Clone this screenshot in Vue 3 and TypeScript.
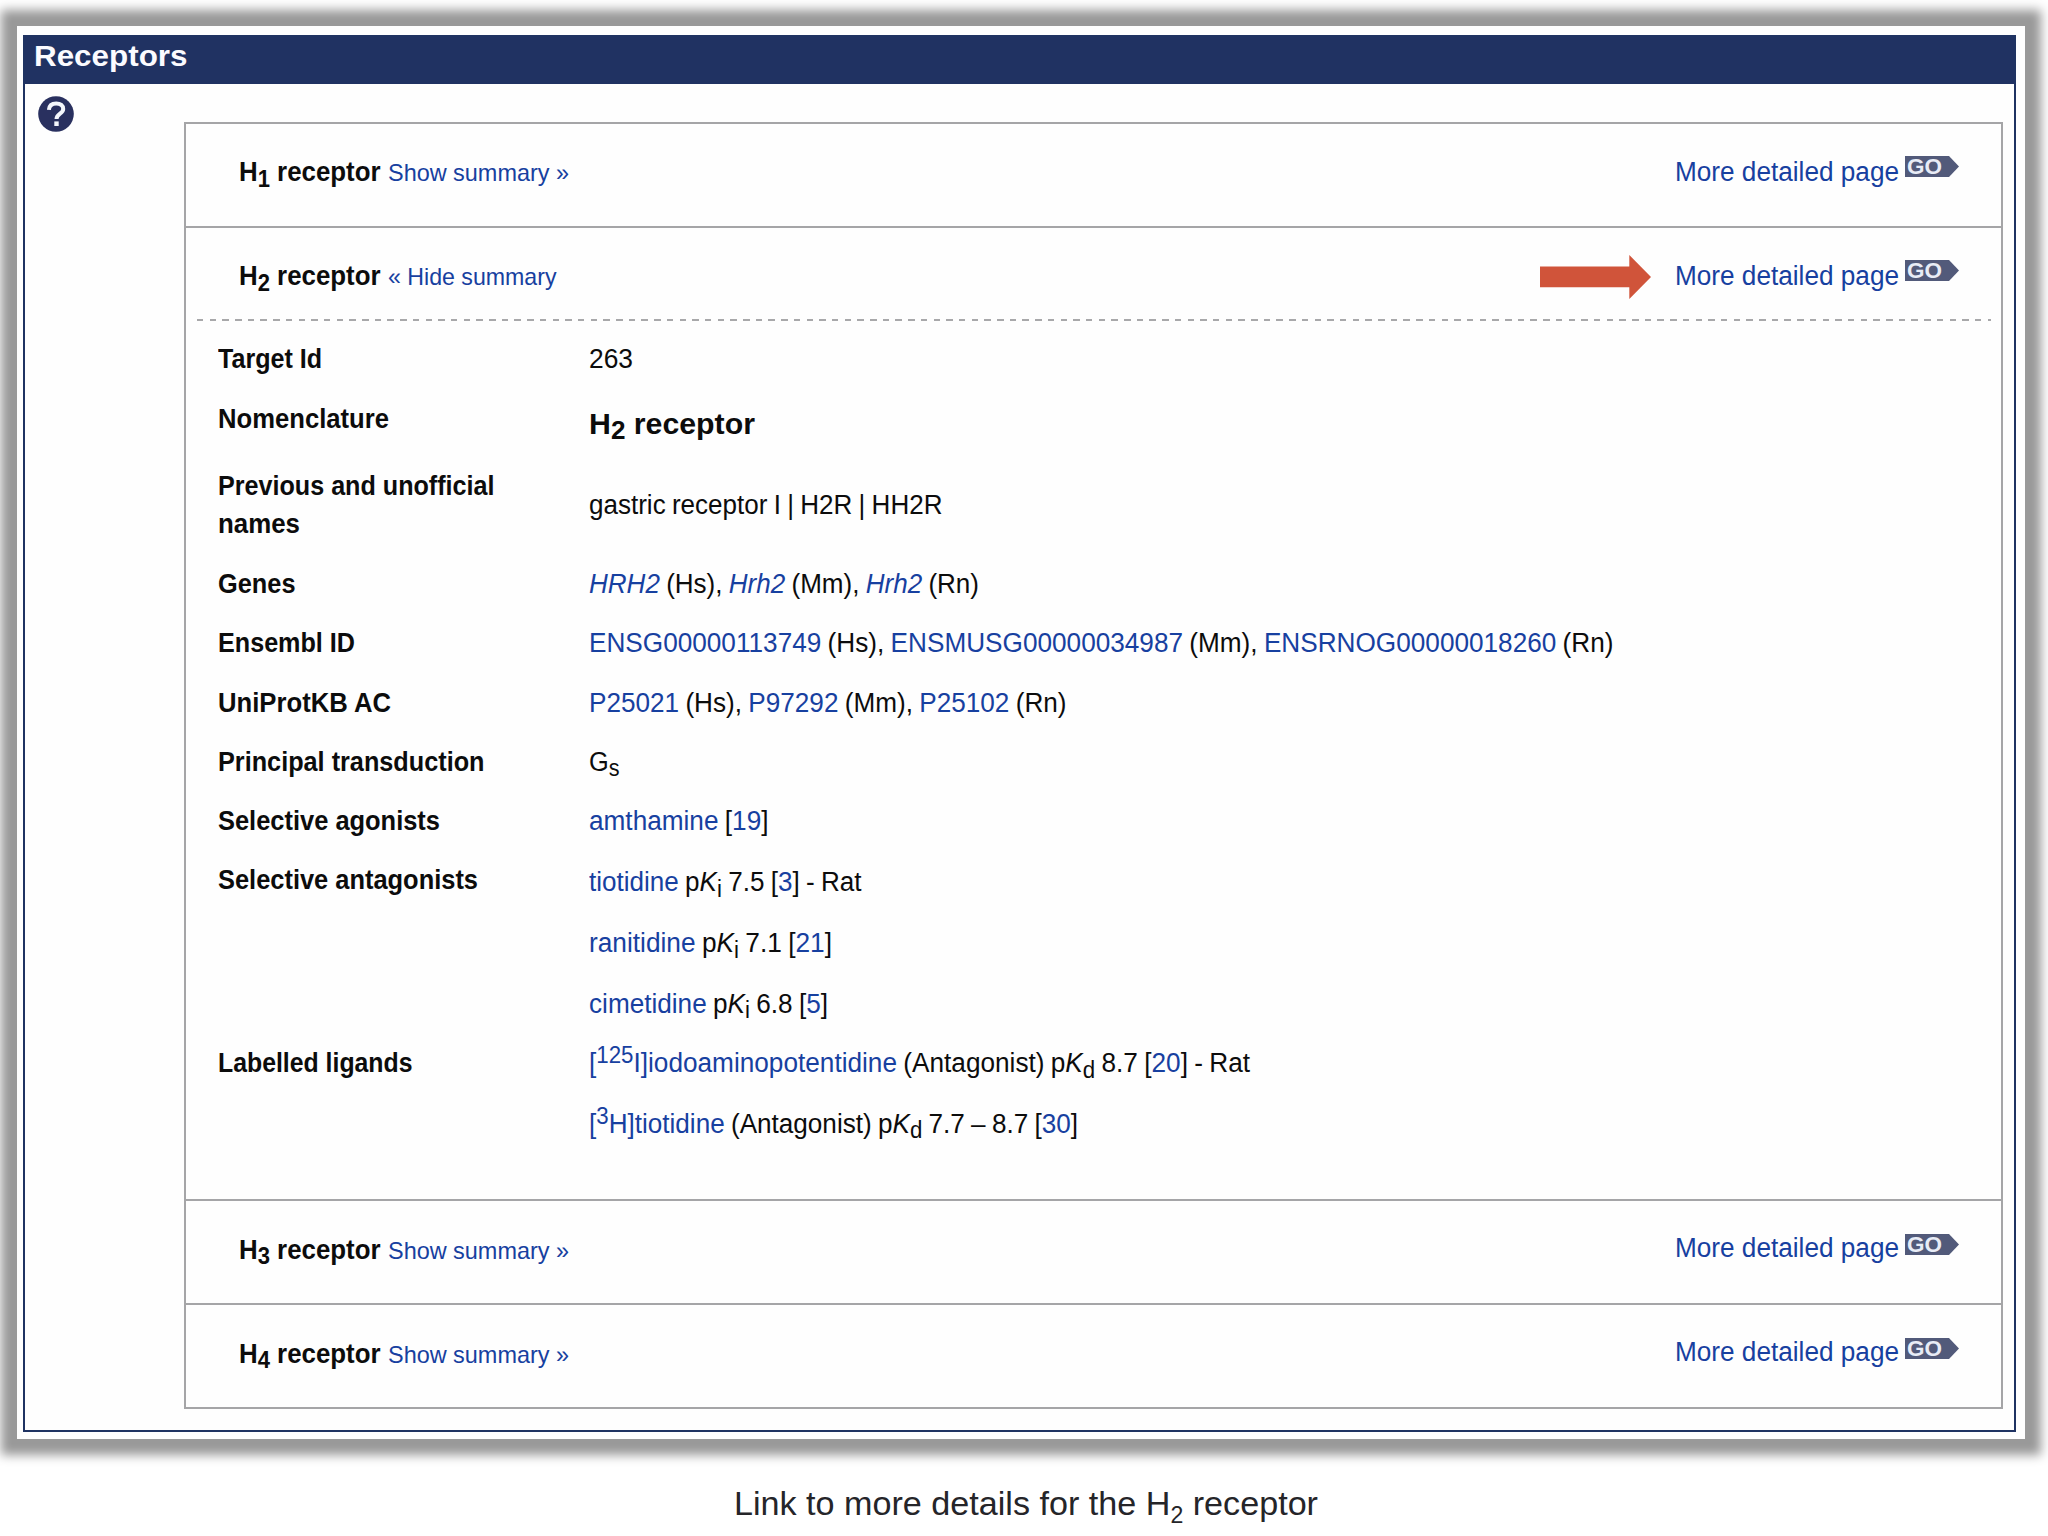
<script setup lang="ts">
import type { Directive } from 'vue'

type Kind = 'text' | 'ref' | 'gene' | 'ital' | 'sub' | 'linksup'
type Seg = [string, Kind?]
interface Line { segs: Seg[]; width: number }
interface Detail { key: string; labels: [string, number][]; lines: Line[] }
interface Receptor { n: string; open: boolean; toggle: string; toggleWidth: number; late?: boolean }

/* Condenses or widens a run of text to the given advance width. */
const vFit: Directive<HTMLElement, number> = {
  mounted(el, { value }) {
    el.style.transform = `scaleX(${value / el.getBoundingClientRect().width})`
  },
}

const receptors: Receptor[] = [
  { n: '1', open: false, toggle: 'Show summary »', toggleWidth: 181 },
  { n: '2', open: true, toggle: '« Hide summary', toggleWidth: 168.5 },
  { n: '3', open: false, toggle: 'Show summary »', toggleWidth: 181, late: true },
  { n: '4', open: false, toggle: 'Show summary »', toggleWidth: 181, late: true },
]

const details: Detail[] = [
  { key: 'target', labels: [['Target Id', 104]], lines: [{ segs: [['263']], width: 44 }] },
  { key: 'name', labels: [['Nomenclature', 171]], lines: [{ segs: [['H'], ['2', 'sub'], [' receptor']], width: 166 }] },
  {
    key: 'previous',
    labels: [['Previous and unofficial', 276.5], ['names', 82]],
    lines: [{ segs: [['gastric receptor I | H2R | HH2R']], width: 353.5 }],
  },
  {
    key: 'genes',
    labels: [['Genes', 77.5]],
    lines: [{ segs: [['HRH2', 'gene'], [' (Hs), '], ['Hrh2', 'gene'], [' (Mm), '], ['Hrh2', 'gene'], [' (Rn)']], width: 390 }],
  },
  {
    key: 'ensembl',
    labels: [['Ensembl ID', 137]],
    lines: [{
      segs: [['ENSG00000113749', 'ref'], [' (Hs), '], ['ENSMUSG00000034987', 'ref'], [' (Mm), '], ['ENSRNOG00000018260', 'ref'], [' (Rn)']],
      width: 1024.5,
    }],
  },
  {
    key: 'uniprot',
    labels: [['UniProtKB AC', 173]],
    lines: [{ segs: [['P25021', 'ref'], [' (Hs), '], ['P97292', 'ref'], [' (Mm), '], ['P25102', 'ref'], [' (Rn)']], width: 477.5 }],
  },
  { key: 'transduction', labels: [['Principal transduction', 266.5]], lines: [{ segs: [['G'], ['s', 'sub']], width: 30.5 }] },
  { key: 'agonists', labels: [['Selective agonists', 222]], lines: [{ segs: [['amthamine', 'ref'], [' ['], ['19', 'ref'], [']']], width: 179.5 }] },
  {
    key: 'antagonists',
    labels: [['Selective antagonists', 260]],
    lines: [
      { segs: [['tiotidine', 'ref'], [' p'], ['K', 'ital'], ['i', 'sub'], [' 7.5 ['], ['3', 'ref'], ['] - Rat']], width: 272.5 },
      { segs: [['ranitidine', 'ref'], [' p'], ['K', 'ital'], ['i', 'sub'], [' 7.1 ['], ['21', 'ref'], [']']], width: 243 },
      { segs: [['cimetidine', 'ref'], [' p'], ['K', 'ital'], ['i', 'sub'], [' 6.8 ['], ['5', 'ref'], [']']], width: 239 },
    ],
  },
  {
    key: 'ligands',
    labels: [['Labelled ligands', 194.5]],
    lines: [
      {
        segs: [['[', 'ref'], ['125', 'linksup'], ['I]iodoaminopotentidine', 'ref'], [' (Antagonist) p'], ['K', 'ital'], ['d', 'sub'], [' 8.7 ['], ['20', 'ref'], ['] - Rat']],
        width: 661,
      },
      {
        segs: [['[', 'ref'], ['3', 'linksup'], ['H]tiotidine', 'ref'], [' (Antagonist) p'], ['K', 'ital'], ['d', 'sub'], [' 7.7 – 8.7 ['], ['30', 'ref'], [']']],
        width: 489,
      },
    ],
  },
]
</script>

<template>
  <main class="page">
    <div class="frame">
      <section class="panel">
        <h1 class="bar"><span class="fit" v-fit="153.5">Receptors</span></h1>
        <div class="body">
          <aside class="side">
            <svg class="help" viewBox="0 0 36 36" width="36" height="36">
              <circle cx="18" cy="18" r="17.8" fill="#29305f" />
              <path d="M10.9 13.8C11.2 9.4 14 7.4 18.2 7.4c4.300 0 7 2.100 7 5.500 0 4.900-6.700 4.600-6.700 10.200" fill="none" stroke="#f4f6fc" stroke-width="4" />
              <rect x="16.3" y="25.4" width="4.4" height="4.6" fill="#f4f6fc" />
            </svg>
          </aside>
          <div class="list">
            <article v-for="r in receptors" :key="r.n" class="item" :class="{ open: r.open, late: r.late }">
              <header class="head">
                <div class="title">
                  <b><span class="fit" v-fit="141.5">H<span class="sub">{{ r.n }}</span> receptor</span></b>
                  <a class="toggle"><span class="fit" v-fit="r.toggleWidth">{{ r.toggle }}</span></a>
                </div>
                <div class="more">
                  <svg v-if="r.open" class="arrow" viewBox="0 0 111 44" width="111" height="44">
                    <path d="M0 11.5H89.3V0L111 22 89.3 44V32.3H0Z" fill="#d0543a" />
                  </svg>
                  <a class="link"><span class="fit" v-fit="224">More detailed page</span></a>
                  <svg class="go" viewBox="0 0 54 21" width="54" height="21">
                    <path d="M0 0H44L54 10.5 44 21H0Z" fill="#525a7a" />
                    <text x="2" y="18" textLength="35" lengthAdjust="spacingAndGlyphs">GO</text>
                  </svg>
                </div>
              </header>
              <div v-if="r.open" class="details">
                <div v-for="d in details" :key="d.key" class="row" :class="d.key">
                  <div class="label">
                    <div v-for="l in d.labels" :key="l[0]"><span class="fit" v-fit="l[1]">{{ l[0] }}</span></div>
                  </div>
                  <div class="value">
                    <div v-for="(line, i) in d.lines" :key="i" class="line">
                      <span class="fit" v-fit="line.width"><span v-for="(s, j) in line.segs" :key="j" :class="s[1]">{{ s[0] }}</span></span>
                    </div>
                  </div>
                </div>
              </div>
            </article>
          </div>
        </div>
      </section>
    </div>
    <p class="caption"><span class="fit" v-fit="584">Link to more details for the H<span class="sub">2</span> receptor</span></p>
  </main>
</template>

<style>
body {
  margin: 0;
  background: #fff;
  overflow: hidden;
}
</style>

<style scoped>
.page {
  box-sizing: border-box;
  width: 2048px;
  height: 1536px;
  padding: 26px 23px 0 16.5px;
  overflow: hidden;
  font: 27px/38px "Liberation Sans", Arial, sans-serif;
  color: #0c0c0c;
  white-space: pre;
}
.page * {
  box-sizing: border-box;
}
.fit {
  display: inline-block;
  transform-origin: left;
}
.frame {
  height: 1413px;
  padding: 9px 9px 7px 6.5px;
  background: #fefefe;
  box-shadow: 0 0 10px 16px #999;
}
.panel {
  height: 1397px;
  border: 2px solid #1f3362;
}
.bar {
  height: 47px;
  margin: 0;
  padding-left: 8.5px;
  background: #203262;
  color: #fbfbff;
  font-size: 30px;
  line-height: 38px;
}
.body {
  display: flex;
}
.side {
  width: 159px;
  padding: 12px 0 0 12.5px;
}
.help {
  display: block;
}
.list {
  width: 1819px;
  margin-top: 38px;
  border: 2px solid #a5a5a7;
}
.item {
  height: 104px;
  border-bottom: 2px solid #a5a5a7;
}
.item:last-child {
  height: 102px;
  border-bottom: 0;
}
.item.open {
  height: 973px;
}
.head {
  display: flex;
  justify-content: space-between;
  height: 94px;
  padding: 29px 42px 0 53px;
}
.open .head {
  height: 93px;
  margin: 0 10px 0 11px;
  padding: 29px 32px 0 42px;
  background: repeating-linear-gradient(90deg, #a8a8aa 0 6.4px, transparent 6.4px 12.7px) left bottom / 100% 2px no-repeat;
}
.title,
.more {
  display: flex;
  height: 38px;
}
.late .title {
  margin-top: 0.5px;
}
.late .link {
  margin-top: -1.5px;
}
.title b,
.toggle,
.link {
  display: block;
}
.title b {
  width: 148.5px;
}
.toggle {
  width: 190px;
  font-size: 24px;
  line-height: 40px;
}
.link {
  width: 224px;
}
.link,
.toggle,
.ref,
.gene,
.linksup {
  color: #1740a0;
}
.gene,
.ital {
  font-style: italic;
}
.sub,
.linksup {
  position: relative;
  top: 5.5px;
  font-size: 23px;
  line-height: 0;
}
.linksup {
  top: -9px;
}
.go {
  display: block;
  margin: 3px 0 0 6px;
  overflow: visible;
}
.late .go {
  margin-top: 4px;
}
.go text {
  font: bold 22px "Liberation Sans", Arial, sans-serif;
  fill: #e8ecf6;
}
.arrow {
  display: block;
  margin: -2px 24.5px 0 0;
}
.details {
  padding: 8.5px 0 0 31.5px;
}
.row {
  display: flex;
  height: 59.3px;
  padding-top: 10.9px;
}
.label {
  width: 371px;
  font-weight: bold;
}
.value {
  word-spacing: -1px;
}
.name {
  height: 67.3px;
}
.name .value {
  padding-top: 5px;
  font-size: 29px;
  font-weight: bold;
  word-spacing: 0;
}
.name .sub {
  font-size: 25px;
}
.previous {
  height: 98px;
}
.previous .value {
  padding-top: 19px;
}
.antagonists {
  height: 182.7px;
}
.antagonists .value {
  padding-top: 2px;
}
.antagonists .line,
.ligands .line {
  height: 60.7px;
}
.caption {
  margin: 44px 0 0;
  padding-left: 717.5px;
  font-size: 34px;
  line-height: 40px;
  color: #252529;
}
.caption .sub {
  top: 7.5px;
}
</style>
